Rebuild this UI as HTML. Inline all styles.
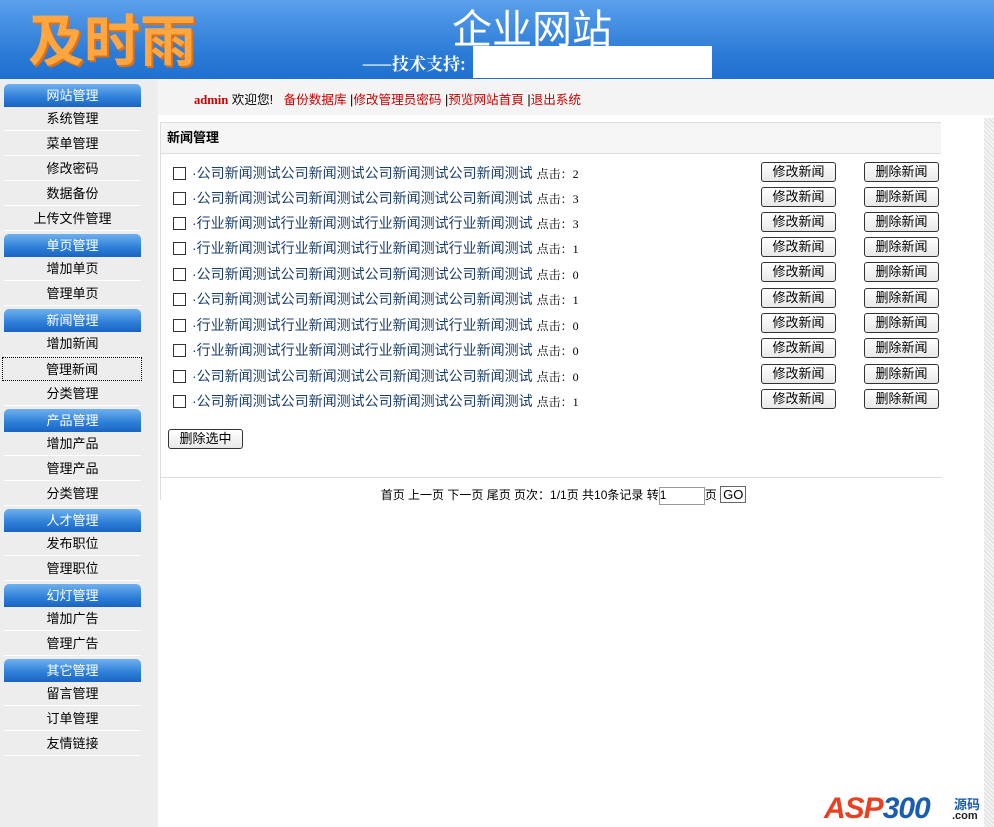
<!DOCTYPE html>
<html><head><meta charset="utf-8"><style>
*{margin:0;padding:0;box-sizing:border-box}
body{width:994px;height:827px;overflow:hidden;background:#fff;font-family:"Liberation Sans","SimSun","Noto Sans CJK SC",sans-serif;font-size:12px;color:#000;position:relative}
.hd{position:absolute;left:0;top:0;width:994px;height:79px;background:linear-gradient(#5aa0ec,#2a7ad6 70%,#2070d0)}
.logo{position:absolute;left:28px;top:6px;font:bold 56px "Noto Sans CJK SC",sans-serif;color:#ffa640;letter-spacing:0;text-shadow:2px 2px 0 #e07010;line-height:64px}
.title{position:absolute;left:452px;top:2px;font:40px "Noto Sans CJK SC",sans-serif;color:#fff;line-height:48px}
.sup{position:absolute;left:362px;top:50px;font:bold 17px "Noto Serif CJK SC",serif;color:#fff;line-height:26px}
.box{position:absolute;left:473px;top:46px;width:239px;height:32px;background:#fff}
.side{position:absolute;left:0;top:79px;width:158px;height:748px;background:#ededed}
.sh{position:absolute;left:4px;width:137px;height:23px;border-radius:5px 5px 0 0;background:linear-gradient(#6fb0ee,#2c7ed8 60%,#1a64c0);color:#fff;text-align:center;line-height:23px;font-size:13px}
.si{position:absolute;left:4px;width:137px;height:24px;text-align:center;line-height:24px;font-size:13px;border-bottom:1px solid #fff}
.top{position:absolute;left:158px;top:79px;width:836px;height:36px;background:#f4f4f4}
.nav{position:absolute;left:194px;top:89px;font-size:12.6px;color:#c00}
.panel{position:absolute;left:160px;top:122px;width:781px;height:378px;border:1px solid #ddd;border-bottom:none;border-right:none}
.ph{height:31px;background:#f5f5f5;border-bottom:1px solid #ddd;font-weight:bold;line-height:30px;padding-left:6px;font-size:13px}
.row{position:absolute;left:12px;height:20px;line-height:20px;font-size:14px;color:#1a3d6a;white-space:nowrap}
.cb{display:inline-block;width:13px;height:13px;border:1px solid #333;vertical-align:-2px;margin-right:6px;background:#fff}
.row b{font-weight:normal;color:#000;font-size:12px;font-family:"Liberation Serif","Noto Serif CJK SC",serif}
.btn{position:absolute;width:75px;height:20px;border:1px solid #333;border-radius:3px;background:linear-gradient(#fff,#e8e8e8);text-align:center;line-height:18px;font-size:13px}
.foot{position:absolute;left:0;top:354px;width:781px;border-top:1px solid #ddd;padding-top:8px;text-align:center;font-size:12px;padding-left:24px}
.stripe{position:absolute;left:984px;top:118px;width:10px;height:709px;background:repeating-linear-gradient(45deg,#ddd 0 1px,#f4f4f4 1px 3px)}
</style></head><body>
<div class="hd"><div class="logo">及时雨</div><div class="title">企业网站</div><div class="sup">——技术支持:</div><div class="box"></div></div>
<div class="side">
<div class="sh" style="top:5px">网站管理</div>
<div class="si" style="top:28px">系统管理</div><div class="si" style="top:53px">菜单管理</div><div class="si" style="top:78px">修改密码</div><div class="si" style="top:103px">数据备份</div><div class="si" style="top:128px">上传文件管理</div>
<div class="sh" style="top:155px">单页管理</div>
<div class="si" style="top:178px">增加单页</div><div class="si" style="top:203px">管理单页</div>
<div class="sh" style="top:230px">新闻管理</div>
<div class="si" style="top:253px">增加新闻</div><div class="si" style="top:278px;border:1px dotted #000;left:2px;width:140px">管理新闻</div><div class="si" style="top:303px">分类管理</div>
<div class="sh" style="top:330px">产品管理</div>
<div class="si" style="top:353px">增加产品</div><div class="si" style="top:378px">管理产品</div><div class="si" style="top:403px">分类管理</div>
<div class="sh" style="top:430px">人才管理</div>
<div class="si" style="top:453px">发布职位</div><div class="si" style="top:478px">管理职位</div>
<div class="sh" style="top:505px">幻灯管理</div>
<div class="si" style="top:528px">增加广告</div><div class="si" style="top:553px">管理广告</div>
<div class="sh" style="top:580px">其它管理</div>
<div class="si" style="top:603px">留言管理</div><div class="si" style="top:628px">订单管理</div><div class="si" style="top:653px">友情链接</div>
</div>
<div class="top"></div>
<div class="nav"><b style="font-family:'Liberation Serif',serif">admin</b> <span style="color:#000">欢迎您!</span> &nbsp; 备份数据库 <span style="color:#000">|</span>修改管理员密码 <span style="color:#000">|</span>预览网站首頁 <span style="color:#000">|</span>退出系统</div>
<div class="stripe"></div>
<div class="panel"><div class="ph">新闻管理</div>
<div class="row" style="top:40px"><span class="cb"></span>·公司新闻测试公司新闻测试公司新闻测试公司新闻测试 <b>点击：2</b></div>
<div class="row" style="top:65px"><span class="cb"></span>·公司新闻测试公司新闻测试公司新闻测试公司新闻测试 <b>点击：3</b></div>
<div class="row" style="top:90px"><span class="cb"></span>·行业新闻测试行业新闻测试行业新闻测试行业新闻测试 <b>点击：3</b></div>
<div class="row" style="top:115px"><span class="cb"></span>·行业新闻测试行业新闻测试行业新闻测试行业新闻测试 <b>点击：1</b></div>
<div class="row" style="top:141px"><span class="cb"></span>·公司新闻测试公司新闻测试公司新闻测试公司新闻测试 <b>点击：0</b></div>
<div class="row" style="top:166px"><span class="cb"></span>·公司新闻测试公司新闻测试公司新闻测试公司新闻测试 <b>点击：1</b></div>
<div class="row" style="top:192px"><span class="cb"></span>·行业新闻测试行业新闻测试行业新闻测试行业新闻测试 <b>点击：0</b></div>
<div class="row" style="top:217px"><span class="cb"></span>·行业新闻测试行业新闻测试行业新闻测试行业新闻测试 <b>点击：0</b></div>
<div class="row" style="top:243px"><span class="cb"></span>·公司新闻测试公司新闻测试公司新闻测试公司新闻测试 <b>点击：0</b></div>
<div class="row" style="top:268px"><span class="cb"></span>·公司新闻测试公司新闻测试公司新闻测试公司新闻测试 <b>点击：1</b></div>
<div class="btn" style="left:600px;top:39px">修改新闻</div><div class="btn" style="left:703px;top:39px">删除新闻</div>
<div class="btn" style="left:600px;top:64px">修改新闻</div><div class="btn" style="left:703px;top:64px">删除新闻</div>
<div class="btn" style="left:600px;top:89px">修改新闻</div><div class="btn" style="left:703px;top:89px">删除新闻</div>
<div class="btn" style="left:600px;top:114px">修改新闻</div><div class="btn" style="left:703px;top:114px">删除新闻</div>
<div class="btn" style="left:600px;top:139px">修改新闻</div><div class="btn" style="left:703px;top:139px">删除新闻</div>
<div class="btn" style="left:600px;top:165px">修改新闻</div><div class="btn" style="left:703px;top:165px">删除新闻</div>
<div class="btn" style="left:600px;top:190px">修改新闻</div><div class="btn" style="left:703px;top:190px">删除新闻</div>
<div class="btn" style="left:600px;top:215px">修改新闻</div><div class="btn" style="left:703px;top:215px">删除新闻</div>
<div class="btn" style="left:600px;top:241px">修改新闻</div><div class="btn" style="left:703px;top:241px">删除新闻</div>
<div class="btn" style="left:600px;top:266px">修改新闻</div><div class="btn" style="left:703px;top:266px">删除新闻</div>
<div class="btn" style="left:7px;top:306px">删除选中</div>
<div class="foot">首页 上一页 下一页 尾页 页次：1/1页 共10条记录 转<span style="display:inline-block;width:46px;height:18px;border:1px solid #999;text-align:left;vertical-align:middle">1</span>页 <span style="display:inline-block;border:1px solid #666;padding:0 2px;font-size:13px">GO</span></div>
</div>
<div style="position:absolute;left:824px;top:792px;font:italic bold 30px 'Liberation Sans',sans-serif;color:#e84020;letter-spacing:-1px">ASP<span style="color:#1a5cb0">300</span></div>
<div style="position:absolute;left:954px;top:794px;font:bold 13px 'Noto Sans CJK SC',sans-serif;color:#1a5cb0">源码</div>
<div style="position:absolute;left:952px;top:810px;font:bold 11px 'Liberation Sans',sans-serif;color:#222">.com</div>
</body></html>
